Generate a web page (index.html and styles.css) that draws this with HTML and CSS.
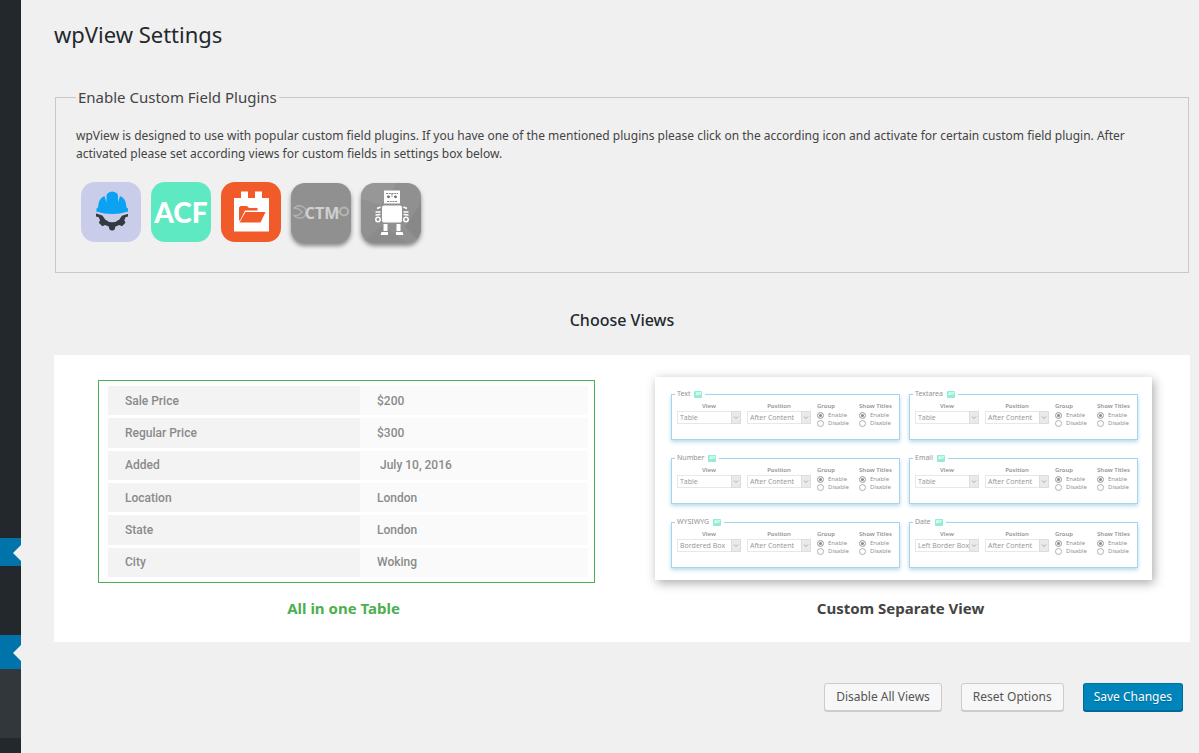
FILE: index.html
```html
<!DOCTYPE html>
<html lang="en">
<head>
<meta charset="utf-8">
<title>wpView Settings</title>
<link rel="stylesheet" href="styles.css">
</head>
<body>
<div class="layout">
  <nav class="sidebar" aria-label="Admin menu">
    <a class="menu-link" href="#dashboard" aria-label="Dashboard"></a>
    <a class="menu-link menu-link-parent" href="#settings" aria-label="Settings"></a>
    <div class="submenu"></div>
  </nav>
  <main class="content">
    <h1 class="title">wpView Settings</h1>

    <fieldset class="plugins">
      <legend class="plugins-legend">Enable Custom Field Plugins</legend>
      <p class="plugins-text">wpView is designed to use with popular custom field plugins. If you have one of the mentioned plugins please click on the according icon and activate for certain custom field plugin. After activated please set according views for custom fields in settings box below.</p>
      <div class="plugin-list">
        <button type="button" class="plugin plugin-toolset" aria-label="Toolset Types">
          <svg viewBox="0 0 60 60">
            <path d="M15 29.500H47V34.500L44.500 35.300L43.300 38.200L44.500 40.700L41 44.200L38.400 43L34.500 44.600L33.600 47.500Q33.200 48.500 31.200 48.500Q29 48.500 28.600 47.500L27.700 44.600L24 43L21.300 44.200L17.800 40.700L19 38.200L17.800 35.300L15 34.500Z" fill="#333a40"/>
            <path d="M21 30H41.500A10.200 10.200 0 0 1 21 30Z" fill="#c9cdea"/>
            <path d="M15 30Q31 37 47.500 30" fill="none" stroke="#c9cdea" stroke-width="3"/>
            <path d="M15.500 29.500V26.500L17 25.500Q17.500 16 23.500 14L25.500 20.500V13L27 11Q29 9.500 31.200 9.500Q33.500 9.500 35.500 11L37 13V20.500L39 14Q45 16 45.500 25.500L47 26.500V29.500Q31 34.500 15.500 29.500Z" fill="#0ba2f3"/>
          </svg>
        </button>
        <button type="button" class="plugin plugin-acf">ACF</button>
        <button type="button" class="plugin plugin-pods" aria-label="Custom field suite">
          <svg viewBox="0 0 60 60">
            <path d="M13 16H20V9.500H27V16H34V9.500H41V16H48V49.500H13Z" fill="#fff"/>
            <path d="M18 38.500V25.500L19.500 24H26L28 26H36.500V28.500H24L19 38.500Z" fill="#f15a29"/>
            <path d="M24.500 30H44.500L39.500 40.500H18.500Z" fill="#f15a29"/>
          </svg>
        </button>
        <button type="button" class="plugin plugin-off" aria-label="CTM">
          <svg viewBox="0 0 60 60">
            <g fill="none" stroke="#b4b4b4" stroke-width="2">
              <path d="M3 25Q8 21 12 24Q16 26 15 29Q15 33 11 35Q6 36 3 32.500L8 32L11 29L8 26Z" stroke-width="1.300"/>
              <path d="M46 29H49"/>
              <circle cx="53" cy="28.500" r="4"/>
            </g>
            <text class="ctm-text" x="31" y="36" text-anchor="middle">CTM</text>
          </svg>
        </button>
        <button type="button" class="plugin plugin-off" aria-label="Robot fields">
          <svg viewBox="0 0 60 60">
            <path d="M0 0H36L20 22L0 16Z" fill="#a2a2a2" opacity=".4"/>
            <path d="M60 20L44 44L60 60Z" fill="#777" opacity=".3"/>
            <path d="M0 60L22 42L46 60Z" fill="#777" opacity=".2"/>
            <g fill="#fff">
              <rect x="23" y="7.500" width="16" height="13" rx=".5"/>
              <rect x="21" y="22.500" width="20" height="17" rx="2"/>
              <rect x="22.500" y="41" width="4" height="7"/><rect x="35.500" y="41" width="4" height="7"/>
              <path d="M20.500 49h6.500v3h-7.500zM35 49h6.500l1 3H35z"/>
            </g>
            <path d="M25 10.500H37M31 10.500V14M26 18.500H36.500" stroke="#888" stroke-width="1.200" stroke-dasharray="2 .7" fill="none"/>
            <circle cx="27.500" cy="13.800" r="1.400" fill="#666"/><circle cx="34.500" cy="13.800" r="1.400" fill="#666"/>
            <path d="M16 25.500L19.500 24M14.500 29H19.500M14.500 32L19.500 31.500M46 25.500L42.500 24M47.500 29H42.500M47.500 32L42.500 31.500" stroke="#fff" stroke-width="1.600"/>
            <g fill="none" stroke="#fff" stroke-width="1.500"><circle cx="17" cy="36.500" r="2.200"/><circle cx="45" cy="36.500" r="2.200"/></g>
          </svg>
        </button>
      </div>
    </fieldset>

    <h2 class="choose">Choose Views</h2>
    <section class="views">
      <figure class="view view-active">
        <div class="thumb thumb-table">
          <table class="summary">
            <tr><th>Sale Price</th><td>$200</td></tr>
            <tr><th>Regular Price</th><td>$300</td></tr>
            <tr><th>Added</th><td>&nbsp;July 10, 2016</td></tr>
            <tr><th>Location</th><td>London</td></tr>
            <tr><th>State</th><td>London</td></tr>
            <tr><th>City</th><td>Woking</td></tr>
          </table>
        </div>
        <figcaption class="caption">All in one Table</figcaption>
      </figure>
      <figure class="view">
        <div class="thumb thumb-fields" id="fields"></div>
        <figcaption class="caption">Custom Separate View</figcaption>
      </figure>
    </section>

    <div class="actions">
      <button type="button" class="btn">Disable All Views</button>
      <button type="button" class="btn">Reset Options</button>
      <button type="submit" class="btn btn-primary">Save Changes</button>
    </div>
  </main>
</div>
<script src="script.js"></script>
</body>
</html>
```
FILE: styles.css
```css
* { box-sizing: border-box; }
body {
  margin: 0;
  background: #f0f0f0;
  color: #444;
  font: 12px/18px "Noto Sans", "Open Sans", sans-serif;
}
.layout { display: flex; min-height: 100vh; }

.sidebar { flex: 0 0 21px; background: #23282d; padding-top: 538px; }
.menu-link { display: block; position: relative; height: 28px; background: #0073aa; }
.menu-link-parent { height: 34px; margin-top: 69px; }
.menu-link::after {
  content: "";
  position: absolute;
  right: 0;
  top: calc(50% - 5px);
  border: 8px solid transparent;
  border-left: 0;
  border-right-color: #f0f0f0;
  margin-top: -2px;
}
.submenu { height: 69px; background: #32373c; }

.content { flex: 1; min-width: 0; padding: 19px 9px 20px 33px; }
.title { margin: 0; font-size: 22px; line-height: 30px; font-weight: 400; color: #23282d; }

.plugins { margin: 38px 1px 0; padding: 0 20px 26px; border: 1px solid #c8c8c8; min-width: 0; }
.plugins-legend { padding: 0 2px; font-size: 15px; line-height: 20px; }
.plugins-text { margin: 20px 0 16px; }
.plugin-list { display: flex; gap: 10px; padding: 3px 5px; }
.plugin {
  width: 60px; height: 60px; padding: 0; border: 0; border-radius: 14px;
  overflow: hidden; color: #fff;
}
.plugin svg { display: block; width: 60px; height: 60px; }
.plugin-toolset { background: #c9cdea; }
.plugin-acf { background: #5fe9c2; font: 900 28px/60px Lato, sans-serif; }
.plugin-pods { background: #f15a29; }
.plugin-off { background: #909090; margin-top: 1px; box-shadow: 0 3px 4px #888; }
.ctm-text { font: 700 16px "Open Sans", sans-serif; fill: #d0d0d0; }

.choose { margin: 36px 0 0; text-align: center; font-size: 16px; line-height: 22px; font-weight: 500; color: #23282d; }
.views {
  display: grid;
  grid-template-columns: 1fr 1fr;
  gap: 60px;
  align-items: end;
  margin-top: 24px;
  padding: 22px 38px 23px 44px;
  background: #fff;
}
.view { margin: 0; }
.caption { margin-top: 17px; padding-right: 6px; text-align: center; font-size: 15px; line-height: 22px; font-weight: 700; }
.view-active .caption { color: #4caf50; }
.thumb-table { padding: 2px 6px 0 9px; border: 1px solid #4caf50; }
.summary {
  width: 100%; height: 197px; border-spacing: 0 3px; border-collapse: separate;
  font: 500 12px/14px Roboto, sans-serif; color: #8a8a8a;
}
.summary th, .summary td { padding: 0 17px; text-align: left; font-weight: 500; }
.summary th { width: 252px; background: #f3f3f3; }
.summary td { background: #fafafa; }
.view-active .thumb { padding-bottom: 2px; }
.view-active .caption { margin-top: 14px; }

.thumb-fields {
  display: grid;
  grid-template-columns: 1fr 1fr;
  gap: 12px 9px;
  padding: 11px 14px 12px 16px;
  background: #fff;
  box-shadow: 2px 3px 10px #aaa;
  color: #949494;
  font: 6px/8px "Noto Sans", "Open Sans", sans-serif;
}
.field {
  display: grid;
  grid-template-columns: 64px 64px 36px 36px;
  gap: 6px;
  margin: 0; padding: 2px 4px 12px 5px; min-width: 0;
  border: 1px solid #a9d3e8;
  box-shadow: 0 2px 4px #b5dbed;
}
.field-name { display: flex; align-items: center; gap: 4px; margin-left: -2px; padding: 0 3px 0 2px; font-size: 7px; line-height: 12px; }
.badge { width: 8px; border-radius: 1px; background: #91edd3; color: #fff; font-size: 3px; line-height: 7px; font-weight: 800; text-align: center; }
.field-title { display: block; font-weight: 600; line-height: 9px; white-space: nowrap; }
.pick { text-align: center; }
.pick select {
  display: block; width: 100%; height: 13px; padding: 0 0 0 2px;
  appearance: none; border: 1px solid #e8e8e8; border-radius: 0; color: #949494;
  font: 7px/10px "Open Sans", sans-serif;
  background: #fff;
}
.pick-box { display: grid; }
.pick-box > * { grid-area: 1 / 1; }
.arrow { justify-self: end; width: 10px; height: 13px; background: #eaeaea; border: 1px solid #ddd; pointer-events: none; z-index: 1; }
.arrow svg { display: block; }
.choice { display: flex; align-items: center; gap: 4px; height: 8px; }
.choice input {
  appearance: none; flex: none; width: 7px; height: 7px; margin: 0;
  border: 1px solid #b0b0b0; border-radius: 50%; background: #fff;
}
.choice input:checked { background: #888; box-shadow: inset 0 0 0 1px #fff; }

.actions { display: flex; flex-wrap: wrap; justify-content: flex-end; gap: 19px; margin-top: 41px; padding-right: 7px; }
.btn {
  height: 28px; padding: 0 11px; border: 1px solid #ccc; border-radius: 3px;
  background: #f7f7f7; box-shadow: 0 1px 0 #ccc; color: #555;
  font: 12px/26px "Noto Sans", "Open Sans", sans-serif;
}
.btn-primary {
  padding: 0 10px;
  background: #0085ba; border-color: #0073aa #006799 #006799; box-shadow: 0 1px 0 #006799; color: #fff;
  text-shadow: 0 1px 1px #006799;
}
```
FILE: script.js
```js
const fields = [
  ["Text", "Table"], ["Textarea", "Table"],
  ["Number", "Table"], ["Email", "Table"],
  ["WYSIWYG", "Bordered Box"], ["Date", "Left Border Box"]
];

const pick = (title, value) => `
  <label class="pick"><span class="field-title">${title}</span>
    <span class="pick-box"><select><option>${value}</option></select>
    <span class="arrow"><svg viewBox="0 0 8 11" width="8" height="11"><path d="M2 4.500L4 6.500L6 4.500" fill="none" stroke="#aaa"/></svg></span></span>
  </label>`;

const group = (title, name) => `
  <div><span class="field-title">${title}</span>
    <label class="choice"><input type="radio" name="${name}" checked>Enable</label>
    <label class="choice"><input type="radio" name="${name}">Disable</label>
  </div>`;

document.getElementById("fields").innerHTML = fields.map(([name, view]) => `
  <fieldset class="field">
    <legend class="field-name">${name}<span class="badge">ACF</span></legend>
    ${pick("View", view)}${pick("Position", "After Content")}
    ${group("Group", name + "-group")}${group("Show Titles", name + "-titles")}
  </fieldset>`).join("");
```
